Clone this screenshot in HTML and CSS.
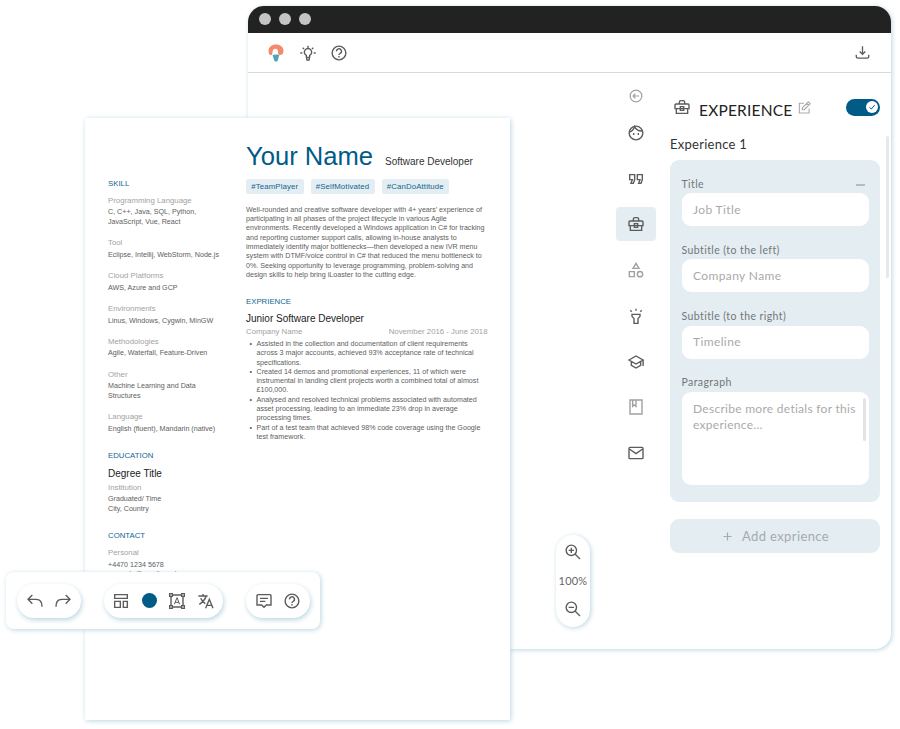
FILE: index.html
```html
<!DOCTYPE html>
<html lang="en">
<head>
<meta charset="utf-8">
<title>Resume editor</title>
<link rel="stylesheet" href="styles.css">
</head>
<body>
<svg class="defs" width="0" height="0">
  <symbol id="help" viewBox="0 0 24 24"><circle cx="12" cy="12" r="10.300"/><path d="M8.300 9.600a3.700 3.700 0 1 1 5.700 2.800c-1.200.9-2 1.300-2 2.600"/><path d="M12 16.600v2.200"/></symbol>
  <symbol id="case" viewBox="0 0 24 24"><path d="M8 7V5a2.500 2.500 0 0 1 2.500-2.500h3A2.500 2.500 0 0 1 16 5v2M3 7.500h18a1.500 1.500 0 0 1 1.500 1.500v5.500h-21V9A1.500 1.500 0 0 1 3 7.500zM3.500 14.500v7h17v-7M9.500 11.500h5v5.500h-5z"/></symbol>
</svg>
<main class="stage">
  <section class="window">
    <header class="titlebar"><i></i><i></i><i></i></header>
    <nav class="topbar">
      <svg class="logo" viewBox="0 0 16 18"><path class="cap" d="M2.500 11C1 10.500.5 9 .5 7 .5 3 3.700.5 8 .5s7.500 2.500 7.500 6.200c0 2.600-1 4.300-4 4.600L10 9.500c.5-3-.5-4.800-2.500-4.800S4.600 6.300 4.500 8.500L4 11z"/><path class="stem" d="M6 10.700l1.700 5.300h.6L9.800 10.700"/></svg>
      <svg class="ic" viewBox="0 0 24 24"><path d="M9.500 18v-2.300a5.500 5.500 0 1 1 5 0V18l-1 4.500h-3zM9 18.500h6M12 4V1M.5 12h3M20.500 12h3M4 4l2 2M20 4l-2 2"/></svg>
      <svg class="ic"><use href="#help"/></svg>
      <svg class="ic download" viewBox="0 0 24 24"><path d="M12 2v13M7.500 10.500 12 15l4.500-4.500M2 15.500V18a3 3 0 0 0 3 3h14a3 3 0 0 0 3-3v-2.500"/></svg>
    </nav>
    <div class="workspace">
      <div class="zoom">
        <svg class="ic" viewBox="0 0 24 24"><circle cx="9.500" cy="9.500" r="7.800"/><path d="m15 15 7.500 7.500M5.500 9.500h8M9.500 5.500v8"/></svg>
        <span>100%</span>
        <svg class="ic" viewBox="0 0 24 24"><circle cx="9.500" cy="9.500" r="7.800"/><path d="m15 15 7.500 7.500M5.500 9.500h8"/></svg>
      </div>
      <nav class="rail">
        <a class="back"><svg class="ic pale" viewBox="0 0 24 24"><circle cx="12" cy="12" r="10"/><path d="M17.500 12H7M11 8l-4 4 4 4"/></svg></a>
        <a><svg class="ic" viewBox="0 0 24 24"><circle cx="12" cy="12" r="10.300"/><path d="M2 10.500c4-.8 6.500-3.500 7.800-8 2.500 5 6.500 7 12 6.500M8.500 12v3M15.500 12v3"/></svg></a>
        <a><svg class="ic" viewBox="0 0 24 24"><path d="M2.500 5.500H10V13l-2 5.500H4.500L6.500 13h-4zM14 5.500h7.500V13l-2 5.500H16l2-5.500h-4z"/></svg></a>
        <a class="active"><svg class="ic"><use href="#case"/></svg></a>
        <a><svg class="ic pale" viewBox="0 0 24 24"><path d="M12 2 7.500 9.500h9zM2 14.500h7.500V22H2z"/><circle cx="18" cy="18.200" r="4"/></svg></a>
        <a><svg class="ic" viewBox="0 0 24 24"><path d="M6 9.500h12v3l-3 3.500v7H9v-7l-3-3.500zM12 1v3M3.500 3.500l2 2M20.500 3.500l-2 2"/></svg></a>
        <a><svg class="ic" viewBox="0 0 24 24"><path d="M1.500 9 12 3l10.500 6L12 15zM5 11.500V17l7 4 7-4v-5.500M22.700 9v9"/></svg></a>
        <a><svg class="ic pale" viewBox="0 0 24 24"><path d="M3 1.500h18v21H3zM7 1.500V11l2.500-2 2.500 2V1.500"/></svg></a>
        <a><svg class="ic" viewBox="0 0 24 24"><rect x="1.500" y="3.500" width="21" height="17" rx="1.500"/><path d="m2 6 10 7 10-7"/></svg></a>
      </nav>
      <aside class="panel">
        <div class="head">
          <svg class="ic"><use href="#case"/></svg>
          <h2>EXPERIENCE</h2>
          <svg class="edit" viewBox="0 0 24 24"><path d="M11 4H2.500v18h18v-8M8 12.500l11-11L22.500 5l-11 11H8zM16 4.500 19.500 8"/></svg>
          <span class="toggle"><svg viewBox="0 0 12 12"><circle cx="6" cy="6" r="6"/><path d="m3.400 6.200 1.900 1.800 3.400-3.800"/></svg></span>
        </div>
        <h3>Experience 1</h3>
        <div class="card">
          <div class="label"><span>Title</span><b></b></div>
          <div class="field">Job Title</div>
          <div class="label"><span>Subtitle (to the left)</span></div>
          <div class="field">Company Name</div>
          <div class="label"><span>Subtitle (to the right)</span></div>
          <div class="field">Timeline</div>
          <div class="label"><span>Paragraph</span></div>
          <div class="field area"><span>Describe more detials for this<br>experience...</span><i></i></div>
        </div>
        <div class="add"><svg viewBox="0 0 10 10"><path d="M5 .5v9M.5 5h9"/></svg><span>Add exprience</span></div>
      </aside>
      <div class="scroll"></div>
    </div>
  </section>

  <article class="sheet">
    <div class="left">
      <h4>SKILL</h4>
      <h5>Programming Language</h5><p>C, C++, Java, SQL, Python,<br>JavaScript, Vue, React</p>
      <h5>Tool</h5><p>Eclipse, Intellij, WebStorm, Node.js</p>
      <h5>Cloud Platforms</h5><p>AWS, Azure and GCP</p>
      <h5>Environments</h5><p>Linus, Windows, Cygwin, MinGW</p>
      <h5>Methodologies</h5><p>Agile, Waterfall, Feature-Driven</p>
      <h5>Other</h5><p>Machine Learning and Data<br>Structures</p>
      <h5>Language</h5><p>English (fluent), Mandarin (native)</p>
      <h4 class="next">EDUCATION</h4>
      <h6>Degree Title</h6>
      <h5>Institution</h5><p>Graduated/ Time<br>City, Country</p>
      <h4 class="next">CONTACT</h4>
      <h5>Personal</h5><p>+4470 1234 5678<br>example@gmail.co.uk</p>
    </div>
    <div class="right">
      <div class="name"><h1>Your Name</h1><span>Software Developer</span></div>
      <div class="tags"><span>#TeamPlayer</span><span>#SelfMotivated</span><span>#CanDoAttitude</span></div>
      <p>Well-rounded and creative software developer with 4+ years’ experience of<br>participating in all phases of the project lifecycle in various Agile<br>environments. Recently developed a Windows application in C# for tracking<br>and reporting customer support calls, allowing in-house analysts to<br>immediately identify major bottlenecks—then developed a new IVR menu<br>system with DTMF/voice control in C# that reduced the menu bottleneck to<br>0%. Seeking opportunity to leverage programming, problem-solving and<br>design skills to help bring iLoaster to the cutting edge.</p>
      <h4>EXPRIENCE</h4>
      <h6>Junior Software Developer</h6>
      <div class="meta"><span>Company Name</span><span>November 2016 - June 2018</span></div>
      <ul>
        <li>Assisted in the collection and documentation of client requirements<br>across 3 major accounts, achieved 93% acceptance rate of technical<br>specifications.</li>
        <li>Created 14 demos and promotional experiences, 11 of which were<br>instrumental in landing client projects worth a combined total of almost<br>£100,000.</li>
        <li>Analysed and resolved technical problems associated with automated<br>asset processing, leading to an immediate 23% drop in average<br>processing times.</li>
        <li>Part of a test team that achieved 98% code coverage using the Google<br>test framework.</li>
      </ul>
    </div>
  </article>

  <div class="tools">
    <div class="pill">
      <svg class="ic" viewBox="0 0 24 24"><path d="M8 3 1.500 9.500 8 16M1.500 9.500H14c6 0 8.500 4 8.500 11"/></svg>
      <svg class="ic" viewBox="0 0 24 24"><path d="m16 3 6.500 6.500L16 16M22.500 9.500H10c-6 0-8.500 4-8.500 11"/></svg>
    </div>
    <div class="pill">
      <svg class="ic" viewBox="0 0 24 24"><path d="M2.500 2.500h19v5.500h-19zM2.500 12.500H11v9H2.500zM15.500 12.500h6v9h-6z"/></svg>
      <i class="dot"></i>
      <svg class="ic" viewBox="0 0 24 24"><path d="M5 3h14M5 21h14M3 5v14M21 5v14M1 1h4v4H1zM19 1h4v4h-4zM1 19h4v4H1zM19 19h4v4h-4z"/><path class="thin" d="M8 17l4-10 4 10M9.300 14h5.400"/></svg>
      <svg class="ic" viewBox="0 0 24 24"><path d="M.5 4.500h14M7.500 1.500v3M12 4.500c-1 5-5 9-10 12.500M4 8c1.500 3.500 4 6 7 8M11.500 23l5.500-13.500L22.500 23M13.500 18.500h7"/></svg>
    </div>
    <div class="pill">
      <svg class="ic" viewBox="0 0 24 24"><path d="M3 2.500h18a1.500 1.500 0 0 1 1.500 1.500v14h-7L12 21.500 8.500 18h-7V4A1.500 1.500 0 0 1 3 2.500zM6 8h12M6 12.500h8"/></svg>
      <svg class="ic"><use href="#help"/></svg>
    </div>
  </div>
</main>
</body>
</html>
```
FILE: styles.css
```css
* { box-sizing: border-box; margin: 0; padding: 0; }
body { width: 900px; height: 729px; overflow: hidden; background: #fff; font-family: Lato, "Open Sans", sans-serif; color: #666; }
svg { display: block; flex: none; fill: none; overflow: visible; }
.defs { position: absolute; }
.stage { position: relative; height: 729px; padding: 5.500px 0 0 248px; }
.ic { width: 16px; height: 16px; stroke: #5c5c5c; stroke-width: 2.100; }
.pale { stroke: #a0a0a0; }
.thin { stroke-width: 1.500; }

.window { width: 643px; height: 643px; border-radius: 16px; background: #fff; overflow: hidden; box-shadow: 1px 1px 5px #bcd6e2; }
.titlebar { height: 27.500px; background: #222; display: flex; align-items: center; gap: 8px; padding-left: 11px; }
.titlebar i { width: 12px; height: 12px; border-radius: 50%; background: #c4c4c4; }
.topbar { height: 40px; border-bottom: 1px solid #d9d9d9; display: flex; align-items: center; gap: 15.500px; padding: 0 21px 0 20px; }
.logo { width: 16px; height: 18px; }
.cap { fill: #f48a6c; }
.stem { stroke: #4ba3b5; stroke-width: 3; stroke-linejoin: round; }
.download { margin-left: auto; width: 15px; height: 15px; }

.workspace { height: 575px; display: flex; align-items: flex-start; }
.zoom { width: 34px; height: 92px; margin: 462px 26px 0 308px; border-radius: 17px; background: #fff; box-shadow: 1px 1px 5px #bcd6e2; display: flex; flex-direction: column; align-items: center; justify-content: space-between; padding: 9px 0 10px; }
.zoom span { font-size: 11px; line-height: 14px; letter-spacing: .2px; }
.rail { width: 40px; display: flex; flex-direction: column; gap: 11.750px; padding-top: 12.500px; margin-right: 14px; }
.rail a { height: 34px; border-radius: 4px; display: flex; align-items: center; justify-content: center; }
.rail a svg { margin-right: 1px; }
.rail .back { height: 20px; margin-bottom: -1.500px; }
.rail .back svg { width: 14px; height: 14px; }
.rail .active { background: #e4edf2; }

.panel { width: 210px; padding-top: 25px; }
.head { display: flex; height: 18px; align-items: center; padding-left: 3.500px; }
.head h2 { font-size: 15.500px; font-weight: 400; line-height: 20px; letter-spacing: .2px; color: #222; margin: 6px 6px 0 9.500px; width: 93px; white-space: nowrap; }
.edit { width: 13px; height: 13px; stroke: #aaa; stroke-width: 2; }
.toggle { width: 34px; height: 17px; margin-left: auto; border-radius: 9px; background: #005b87; padding: 2.500px; display: flex; justify-content: flex-end; }
.toggle svg { width: 12px; height: 12px; }
.toggle circle { fill: #fff; }
.toggle path { stroke: #005b87; stroke-width: 1; }
.panel h3 { font-size: 13px; font-weight: 400; line-height: 18px; letter-spacing: .27px; color: #333; margin: 19px 0 7px; }
.card { height: 342px; border-radius: 9px; background: #e4edf2; padding: 0 11.500px; display: flex; flex-direction: column; }
.label { height: 33.200px; padding-top: 17.500px; display: flex; justify-content: space-between; font-size: 10.500px; line-height: 13px; letter-spacing: .42px; color: #737777; }
.label b { width: 9px; height: 2px; background: #b5bbbe; margin: 6.500px 4px 0 0; }
.field { height: 33px; border-radius: 9px; background: #fff; padding: 8.500px 3px 0 11.500px; font-size: 12px; line-height: 16px; letter-spacing: .38px; color: #aaa; white-space: nowrap; display: flex; justify-content: space-between; }
.area { height: 93px; padding-top: 9px; letter-spacing: .28px; }
.area i { width: 3px; height: 43px; margin-top: -3px; border-radius: 2px; background: #e3e3e3; }
.add { height: 34px; margin-top: 17px; border-radius: 9px; background: #e4edf2; display: flex; align-items: center; justify-content: center; gap: 10px; padding-left: 2px; color: #a5abad; font-size: 13px; letter-spacing: .4px; }
.add svg { width: 9px; height: 9px; stroke: #a5abad; stroke-width: 1.300; }
.scroll { width: 3px; height: 142px; margin: 63px 0 0 5.500px; border-radius: 2px; background: #e8e8e8; }

.sheet { position: absolute; left: 85px; top: 118.400px; width: 425px; height: 601.500px; background: #fff; box-shadow: 1px 1px 5px #bcd6e2; display: flex; padding-left: 23px; font-family: "Liberation Sans", Arial, sans-serif; font-size: 7.150px; line-height: 9.300px; white-space: nowrap; color: #606060; }
.sheet h1, .sheet h4, .sheet h5, .sheet h6 { font-weight: 400; }
.left { width: 138px; padding-top: 59.500px; }
.left h4, .right h4 { font-size: 7.800px; line-height: 11px; color: #0f668f; margin-bottom: 6px; }
.left h5 { font-size: 7.800px; line-height: 11px; color: #a2a2a2; margin-bottom: 2.500px; }
.left p { margin-bottom: 10.150px; }
.left .next { margin-top: 16px; }
.sheet h6 { font-size: 10px; line-height: 12px; color: #222; margin: 7.500px 0 1.500px; }
.right { width: 241.500px; }
.name { display: flex; align-items: baseline; height: 61px; padding-top: 22.500px; }
.name h1 { font-size: 25.600px; line-height: 30px; color: #005b87; width: 139px; }
.name span { font-size: 10px; color: #333; }
.tags { display: flex; gap: 7px; }
.tags span { height: 15px; padding: 0 5.300px; border-radius: 2.500px; background: #e4edf2; color: #10658e; font-size: 7.800px; letter-spacing: .13px; line-height: 15px; }
.right p { margin: 11.500px 0 16px; }
.right h4 { margin: 0; }
.right h6 { margin: 5.500px 0 1px; }
.meta { display: flex; justify-content: space-between; font-size: 7.800px; line-height: 11px; color: #a2a2a2; }
.right ul { list-style: none; padding: 3.200px 0 0 10.500px; }
.right li::before { content: "•"; float: left; margin-left: -7px; }

.tools { position: absolute; left: 6px; top: 572px; width: 314px; height: 57px; border-radius: 8px; background: #fff; box-shadow: 1px 1px 5px #bcd6e2; display: flex; align-items: center; gap: 23px; padding: 0 11px; }
.pill { height: 34px; border-radius: 17px; background: #fff; box-shadow: 1px 2px 5px #bcd6e2; display: flex; align-items: center; gap: 12.500px; padding: 0 9.500px; }
.dot { width: 15px; height: 15px; border-radius: 50%; background: #005b87; }
```
